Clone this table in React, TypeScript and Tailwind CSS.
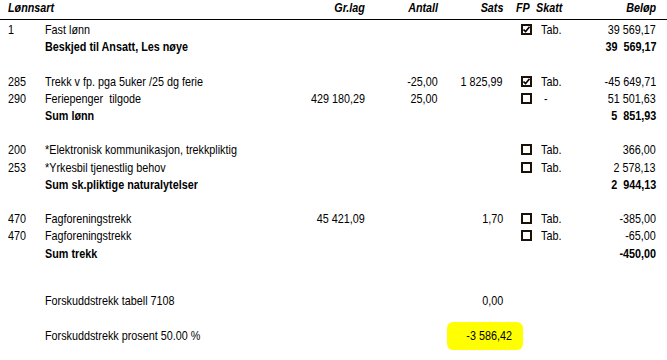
import React from "react";

type Row = {
  code?: string;
  name?: string;
  grlag?: string;
  antall?: string;
  sats?: string;
  fp?: "on" | "off";
  skatt?: string;
  belop?: string;
  sum?: boolean;
};

const rows: (Row | null)[] = [
  { code: "1", name: "Fast lønn", fp: "on", skatt: "Tab.", belop: "39 569,17" },
  { name: "Beskjed til Ansatt, Les nøye", belop: "39  569,17", sum: true },
  null,
  {
    code: "285",
    name: "Trekk v fp. pga 5uker /25 dg ferie",
    antall: "-25,00",
    sats: "1 825,99",
    fp: "on",
    skatt: "Tab.",
    belop: "-45 649,71",
  },
  {
    code: "290",
    name: "Feriepenger  tilgode",
    grlag: "429 180,29",
    antall: "25,00",
    fp: "off",
    skatt: "-",
    belop: "51 501,63",
  },
  { name: "Sum lønn", belop: "5  851,93", sum: true },
  null,
  { code: "200", name: "*Elektronisk kommunikasjon, trekkpliktig", fp: "off", skatt: "Tab.", belop: "366,00" },
  { code: "253", name: "*Yrkesbil tjenestlig behov", fp: "off", skatt: "Tab.", belop: "2 578,13" },
  { name: "Sum sk.pliktige naturalytelser", belop: "2  944,13", sum: true },
  null,
  {
    code: "470",
    name: "Fagforeningstrekk",
    grlag: "45 421,09",
    sats: "1,70",
    fp: "off",
    skatt: "Tab.",
    belop: "-385,00",
  },
  { code: "470", name: "Fagforeningstrekk", fp: "off", skatt: "Tab.", belop: "-65,00" },
  { name: "Sum trekk", belop: "-450,00", sum: true },
];

const grid = "grid grid-cols-[37px_240px_80px_73px_65px_33px_60px_60px] pl-2";

// report font is a narrow sans; squeeze Liberation Sans to match
function L({ children }: { children?: React.ReactNode }) {
  return <span className="inline-block origin-left scale-x-[0.83] whitespace-pre">{children}</span>;
}

function R({ children }: { children?: React.ReactNode }) {
  return (
    <span className="flex justify-end">
      <span className="inline-block origin-right scale-x-[0.83] whitespace-pre">{children}</span>
    </span>
  );
}

function Check({ on }: { on: boolean }) {
  return (
    <span className="ml-[18px] flex h-[11px] w-[11px] items-center justify-center border-2 border-[#1a1208] bg-white">
      {on && (
        <svg width="7" height="7" viewBox="0 0 7 7">
          <path d="M0.5 3.5 L2.6 5.6 L6.5 0.8" fill="none" stroke="#000" strokeWidth="1.6" />
        </svg>
      )}
    </span>
  );
}

export default function App() {
  return (
    <div
      className="h-[360px] w-[667px] overflow-hidden bg-white text-[13px] leading-none text-black"
      style={{ fontFamily: '"Liberation Sans", Arial, sans-serif' }}
    >
      <div className={`${grid} h-[20px] items-end border-b border-black pb-[5px] font-bold italic`}>
        <span className="col-span-2">
          <L>Lønnsart</L>
        </span>
        <R>Gr.lag</R>
        <R>Antall</R>
        <R>Sats</R>
        <span className="pl-[13px]">
          <L>FP</L>
        </span>
        <L>Skatt</L>
        <R>Beløp</R>
      </div>
      <div className="pt-[1px]">
        {rows.map((r, i) =>
          r === null ? (
            <div key={i} className="h-[17.2px]" />
          ) : (
            <div key={i} className={`${grid} h-[17.2px] items-center ${r.sum ? "font-bold" : ""}`}>
              <L>{r.code}</L>
              <L>{r.name}</L>
              <R>{r.grlag}</R>
              <R>{r.antall}</R>
              <R>{r.sats}</R>
              <span>{r.fp && <Check on={r.fp === "on"} />}</span>
              <span className={r.skatt === "-" ? "pl-[8px]" : "pl-[5px]"}>
                <L>{r.skatt}</L>
              </span>
              <R>{r.belop}</R>
            </div>
          )
        )}
      </div>
      <div className={`${grid} mt-[30px] h-[17.2px] items-center`}>
        <span />
        <L>Forskuddstrekk tabell 7108</L>
        <span />
        <span />
        <R>0,00</R>
      </div>
      <div className={`${grid} mt-[13px] h-[28px] items-center`}>
        <span />
        <L>Forskuddstrekk prosent 50.00 %</L>
        <span />
        <span className="col-span-2 flex justify-end">
          <span className="-mr-[20px] flex h-[28px] w-[76px] items-center justify-end rounded-[6px] bg-[#ffff00] pr-[11px]">
            <span className="inline-block origin-right scale-x-[0.83]">-3 586,42</span>
          </span>
        </span>
      </div>
    </div>
  );
}
